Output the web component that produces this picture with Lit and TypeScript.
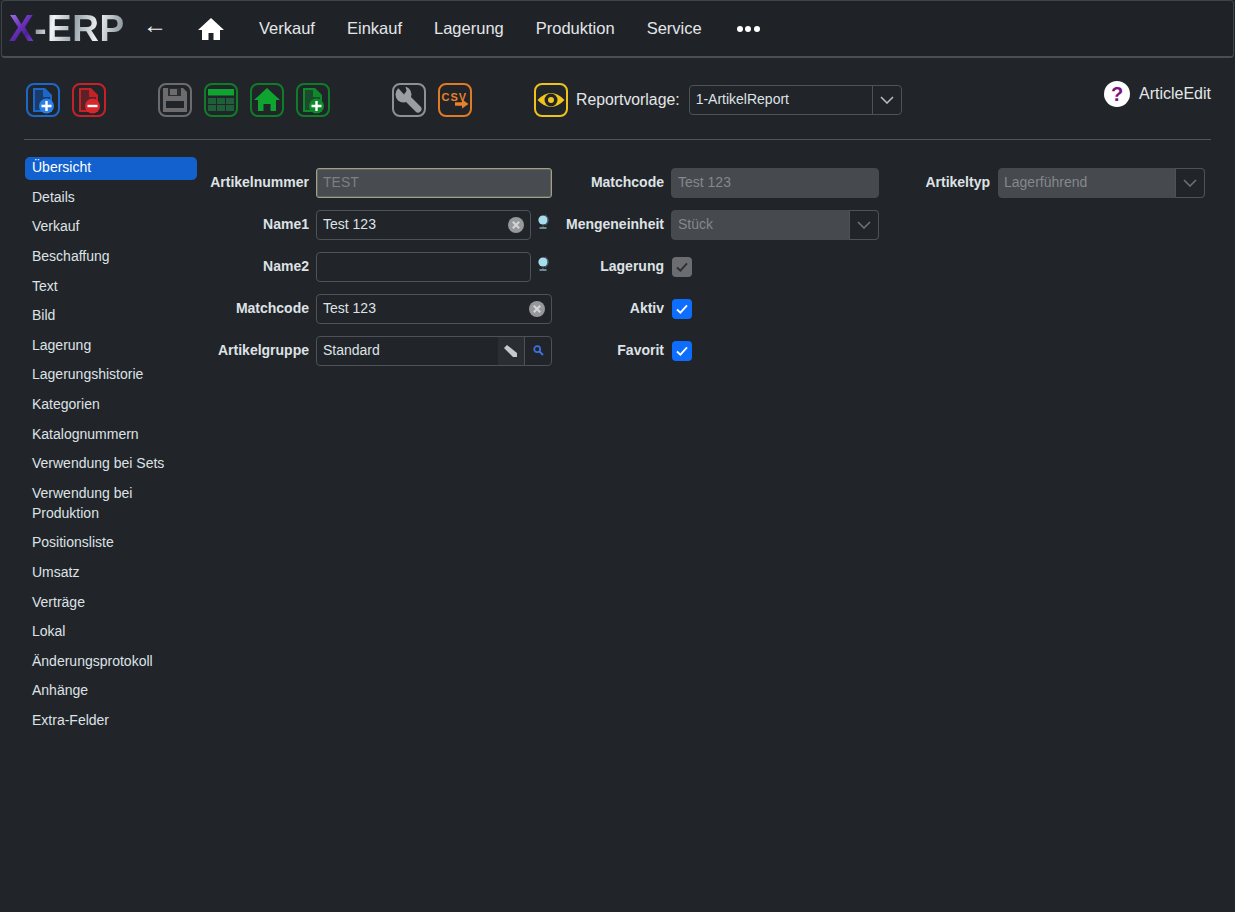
import { LitElement, html, css, svg } from 'lit';
import { customElement } from 'lit/decorators.js';

const NAV = ['Verkauf', 'Einkauf', 'Lagerung', 'Produktion', 'Service'];
const SIDE = [
  'Übersicht', 'Details', 'Verkauf', 'Beschaffung', 'Text', 'Bild', 'Lagerung',
  'Lagerungshistorie', 'Kategorien', 'Katalognummern', 'Verwendung bei Sets',
  'Verwendung bei Produktion', 'Positionsliste', 'Umsatz', 'Verträge', 'Lokal',
  'Änderungsprotokoll', 'Anhänge', 'Extra-Felder',
];

const chevron = html`<svg width="14" height="8" viewBox="0 0 14 8"><path d="M1 1l6 6 6-6" fill="none" stroke="currentColor" stroke-width="1.6"/></svg>`;
const check = html`<svg width="14" height="12" viewBox="0 0 14 12"><path d="M2 6.500l3.400 3.200L12 2.400" fill="none" stroke="currentColor" stroke-width="1.800"/></svg>`;
const clear = html`<svg class="clear" width="16" height="16" viewBox="0 0 16 16"><circle cx="8" cy="8" r="8" fill="#97989c"/><path d="M4.800 4.800l6.400 6.400M11.200 4.800l-6.400 6.400" stroke="#d4d5d7" stroke-width="2"/></svg>`;
const globe = html`<svg class="globe" width="12" height="16" viewBox="0 0 12 16"><circle cx="6" cy="6" r="4.600" fill="#a9dcec"/><path d="M8 .8a6 6 0 0 1 0 10.600M6 11.500v2" fill="none" stroke="#56707a" stroke-width="1"/><path d="M2.500 14h7" stroke="#8fb4c0" stroke-width="1.400"/></svg>`;

const fileIcon = (edge: string, inner: string, badge: string, sign: string) => svg`
  <path d="M7 5h12l7 7v17H7z" fill="${edge}"/>
  <path d="M9 7h8v7h7v13H9z" fill="${inner}"/>
  <circle cx="20.500" cy="23" r="7.500" fill="${badge}"/>
  <path d="${sign}" stroke="#fff" stroke-width="2.400"/>`;

const PLUS = 'M15.500 23h10M20.500 18v10';
const MINUS = 'M15.500 23h10';

const TOOLS = [
  { cls: 'blue', body: fileIcon('#1d67c9', '#1a3c6c', '#2c7fe6', PLUS) },
  { cls: 'red', body: fileIcon('#c62127', '#5a2227', '#d9262c', MINUS) },
  {
    cls: 'gray gap52',
    body: svg`<path d="M5 5h20l4 4v20H5z" fill="#6c6c6e"/><path d="M10 5h13v8H10z" fill="#2b2d31"/><path d="M12 6h7v6h-7z" fill="#6c6c6e"/><path d="M8 18h18v7H8z" fill="#202429"/>`,
  },
  {
    cls: 'green',
    body: svg`<path d="M4 6h26v6.500H4z" fill="#0fa32f"/><path d="M4 15h8v6H4zM13 15h8v6h-8zM22 15h8v6h-8zM4 22h8v6H4zM13 22h8v6h-8zM22 22h8v6h-8z" fill="#1e5e38"/>`,
  },
  {
    cls: 'green',
    body: svg`<path d="M17 5L4 17h4v11h5.500v-7h7v7H26V17h4z" fill="#0fa32f"/>`,
  },
  { cls: 'green', body: fileIcon('#0f8a2a', '#1c4a2c', '#0f8a2a', PLUS) },
  {
    cls: 'steel gap62',
    body: svg`<path d="M14 14L26 26" stroke="#9b9ea2" stroke-width="7" stroke-linecap="round"/><circle cx="11.500" cy="11.500" r="8" fill="#9b9ea2"/><path d="M12 11.500L7.500 2.500h8v6z" fill="#212529" transform="rotate(-15 12 11.500)"/>`,
  },
  {
    cls: 'orange',
    body: svg`<text x="3.500" y="18" font-family="Liberation Sans, sans-serif" font-size="11" font-weight="700" fill="#e8812a" letter-spacing="1">CSV</text><path d="M17 21h8" stroke="#e8812a" stroke-width="3.500"/><path d="M24 16.500l6.500 4.500-6.500 4.500z" fill="#e8812a"/>`,
  },
  {
    cls: 'yellow gap62',
    body: svg`<path d="M3.500 17Q17 3 30.500 17Q17 31 3.500 17z" fill="#f2c618"/><circle cx="17" cy="17" r="6.500" fill="#212529"/><circle cx="17" cy="17" r="3" fill="#f2c618"/>`,
  },
];

@customElement('app-root')
export class AppRoot extends LitElement {
  static styles = css`
    :host {
      display: block;
      height: 912px;
      overflow: hidden;
      background: #212529;
      color: #dee2e6;
      font-family: 'Liberation Sans', Arial, sans-serif;
      font-size: 14px;
    }
    .topbar {
      display: flex;
      align-items: center;
      height: 58px;
      box-sizing: border-box;
      margin: 0 1px;
      border: 1px solid #3f444a;
      border-bottom: 2px solid #4a4f55;
      border-radius: 4px;
      background: #1f2328;
      padding-left: 7px;
    }
    .logo {
      font-size: 37px;
      font-weight: 700;
      line-height: 1;
      width: 132px;
      letter-spacing: 0.5px;
      white-space: nowrap;
    }
    .logo span {
      -webkit-background-clip: text;
      background-clip: text;
      color: transparent;
    }
    .logo .x { background-image: linear-gradient(135deg, #a98ae8, #6a30bc 45%, #4f2096 65%, #8a55dc); }
    .logo .erp { background-image: linear-gradient(100deg, #6f7a82, #f0f4f6 22%, #9aa6ad 45%, #eef1f3 68%, #aab4ba 85%, #7b868d); }
    .back {
      width: 57px;
      font-size: 24px;
      line-height: 1;
      color: #f2f2f2;
      padding: 0 0 7px 2px;
      box-sizing: border-box;
    }
    .home { width: 45px; display: flex; }
    .nav-link {
      font-size: 16.500px;
      color: #e4e6e8;
      padding: 0 16px;
    }
    .dots { display: flex; gap: 2.500px; margin-left: 19px; }
    .dots i { width: 6px; height: 6px; border-radius: 50%; background: #fff; }

    .toolbar {
      display: flex;
      align-items: flex-start;
      gap: 12px;
      padding: 25px 24px 0 26px;
      height: 81px;
      box-sizing: border-box;
    }
    .tool {
      width: 34px;
      height: 34px;
      box-sizing: border-box;
      border: 2px solid;
      border-radius: 8px;
      flex: none;
    }
    .tool svg { display: block; margin: -2px; }
    .blue { border-color: #1d67c9; }
    .red { border-color: #c62127; }
    .gray { border-color: #6c6c6e; }
    .green { border-color: #0f7d28; }
    .steel { border-color: #8d9094; }
    .orange { border-color: #e07b25; }
    .yellow { border-color: #eec21c; }
    .gap52 { margin-left: 40px; }
    .gap62 { margin-left: 50px; }
    .report-label { font-size: 15.800px; line-height: 33px; margin-left: -4px; color: #e4e6e8; }
    .report-select {
      display: flex;
      width: 213px;
      height: 30px;
      margin: 2px 0 0 -3px;
      box-sizing: border-box;
      border: 1px solid #4c5258;
      border-radius: 4px;
      line-height: 26px;
    }
    .report-select .value { flex: 1; padding-left: 6px; margin-top: 0; }
    .report-select .arrow {
      width: 28px;
      border-left: 1px solid #4c5258;
      display: flex;
      align-items: center;
      justify-content: center;
      color: #b5babf;
    }
    .help {
      margin: -2px 0 0 auto;
      display: flex;
      align-items: center;
      gap: 9px;
      font-size: 16px;
      height: 26px;
      color: #e4e6e8;
    }
    .help span { margin-top: -1px; }
    .rule { height: 1px; margin: 0 24px; background: #50555a; }

    .main { display: flex; padding: 17px 0 0 25px; }
    .side { width: 172px; flex: none; line-height: 20px; }
    .side div { padding: 0 7px 3px; margin-bottom: 6.600px; color: #dee2e6; }
    .side .active { background: #1261cf; border-radius: 5px; color: #fff; margin-bottom: 6.900px; }

    .form {
      display: grid;
      grid-template-columns: 112px 243px 112px 215px 111px 215px;
      grid-auto-rows: 30px;
      row-gap: 12px;
      margin-top: 10.700px;
      align-items: center;
    }
    .label { font-weight: 700; text-align: right; color: #dee2e6; white-space: nowrap; margin-top: -2px; }
    .field {
      display: flex;
      align-items: center;
      height: 30px;
      box-sizing: border-box;
      margin-left: 7px;
      border: 1px solid #4c5258;
      border-radius: 4px;
      padding-left: 6px;
      color: #dee2e6;
    }
    .col3 { margin-left: 8px; padding-left: 5px; }
    .value { flex: 1; margin-top: -2px; }
    .disabled { background: #46494e; border-color: #46494e; color: #85888c; }
    .locked {
      background: #484b4f;
      border-color: #a3a088;
      box-shadow: inset 0 0 0 1px rgba(163, 160, 136, 0.3);
      color: #7d8084;
      border-radius: 3px;
    }
    .clear { margin-right: 6px; }
    .with-globe { display: flex; align-items: center; }
    .with-globe .field { width: 215px; flex: none; }
    .globe { margin: -5px 0 0 6px; flex: none; }
    .arrow-part {
      width: 28px;
      align-self: stretch;
      margin: -1px -1px -1px 0;
      background: #212529;
      border: 1px solid #4c5258;
      border-radius: 0 4px 4px 0;
      display: flex;
      align-items: center;
      justify-content: center;
      color: #6c7176;
    }
    .pen, .find {
      align-self: stretch;
      display: flex;
      align-items: center;
      justify-content: center;
    }
    .pen { width: 26px; background: #2a2e33; border-right: 1px solid #4c5258; }
    .find { width: 26px; }
    .box {
      width: 20px;
      height: 20px;
      margin-left: 8px;
      border-radius: 4px;
      display: flex;
      align-items: center;
      justify-content: center;
      background: #0d6efd;
      color: #fff;
    }
    .box.off { background: #6b6d70; color: #2b2e32; }
  `;

  render() {
    return html`
      <div class="topbar">
        <div class="logo"><span class="x">X</span><span class="erp">-ERP</span></div>
        <div class="back">←</div>
        <div class="home">
          <svg width="26" height="24" viewBox="0 0 26 24"><path d="M13 1L0 13h4v10h6.500v-7h5v7H22V13h4z" fill="#fff"/></svg>
        </div>
        ${NAV.map((n) => html`<span class="nav-link">${n}</span>`)}
        <div class="dots"><i></i><i></i><i></i></div>
      </div>

      <div class="toolbar">
        ${TOOLS.map((t) => html`<div class="tool ${t.cls}"><svg width="34" height="34" viewBox="0 0 34 34">${t.body}</svg></div>`)}
        <span class="report-label">Reportvorlage:</span>
        <div class="report-select">
          <span class="value">1-ArtikelReport</span>
          <span class="arrow">${chevron}</span>
        </div>
        <div class="help">
          <svg width="26" height="26" viewBox="0 0 26 26">
            <circle cx="13" cy="13" r="13" fill="#fff"/>
            <text x="13" y="20" text-anchor="middle" font-family="Liberation Sans, sans-serif" font-size="20" font-weight="700" fill="#800f80">?</text>
          </svg>
          <span>ArticleEdit</span>
        </div>
      </div>
      <div class="rule"></div>

      <div class="main">
        <div class="side">
          ${SIDE.map((s, i) => html`<div class=${i === 0 ? 'active' : ''}>${s}</div>`)}
        </div>
        <div class="form">
          <span class="label">Artikelnummer</span>
          <div class="field locked"><span class="value">TEST</span></div>
          <span class="label">Matchcode</span>
          <div class="field disabled"><span class="value">Test 123</span></div>
          <span class="label">Artikeltyp</span>
          <div class="field disabled col3"><span class="value">Lagerführend</span><span class="arrow-part">${chevron}</span></div>

          <span class="label">Name1</span>
          <div class="with-globe"><div class="field"><span class="value">Test 123</span>${clear}</div>${globe}</div>
          <span class="label">Mengeneinheit</span>
          <div class="field disabled"><span class="value">Stück</span><span class="arrow-part">${chevron}</span></div>
          <span></span><span></span>

          <span class="label">Name2</span>
          <div class="with-globe"><div class="field"></div>${globe}</div>
          <span class="label">Lagerung</span>
          <div class="box off">${check}</div>
          <span></span><span></span>

          <span class="label">Matchcode</span>
          <div class="field"><span class="value">Test 123</span>${clear}</div>
          <span class="label">Aktiv</span>
          <div class="box">${check}</div>
          <span></span><span></span>

          <span class="label">Artikelgruppe</span>
          <div class="field">
            <span class="value">Standard</span>
            <span class="pen"><svg width="14" height="14" viewBox="0 0 14 14"><path d="M3 1l10 8v4H9L0 4z" fill="#c8c9cb"/></svg></span>
            <span class="find"><svg width="11" height="11" viewBox="0 0 11 11"><circle cx="4.200" cy="4.200" r="3" fill="none" stroke="#3f6fe0" stroke-width="1.700"/><path d="M6.500 6.500l3.500 3.500" stroke="#3f6fe0" stroke-width="2"/></svg></span>
          </div>
          <span class="label">Favorit</span>
          <div class="box">${check}</div>
        </div>
      </div>
    `;
  }
}
